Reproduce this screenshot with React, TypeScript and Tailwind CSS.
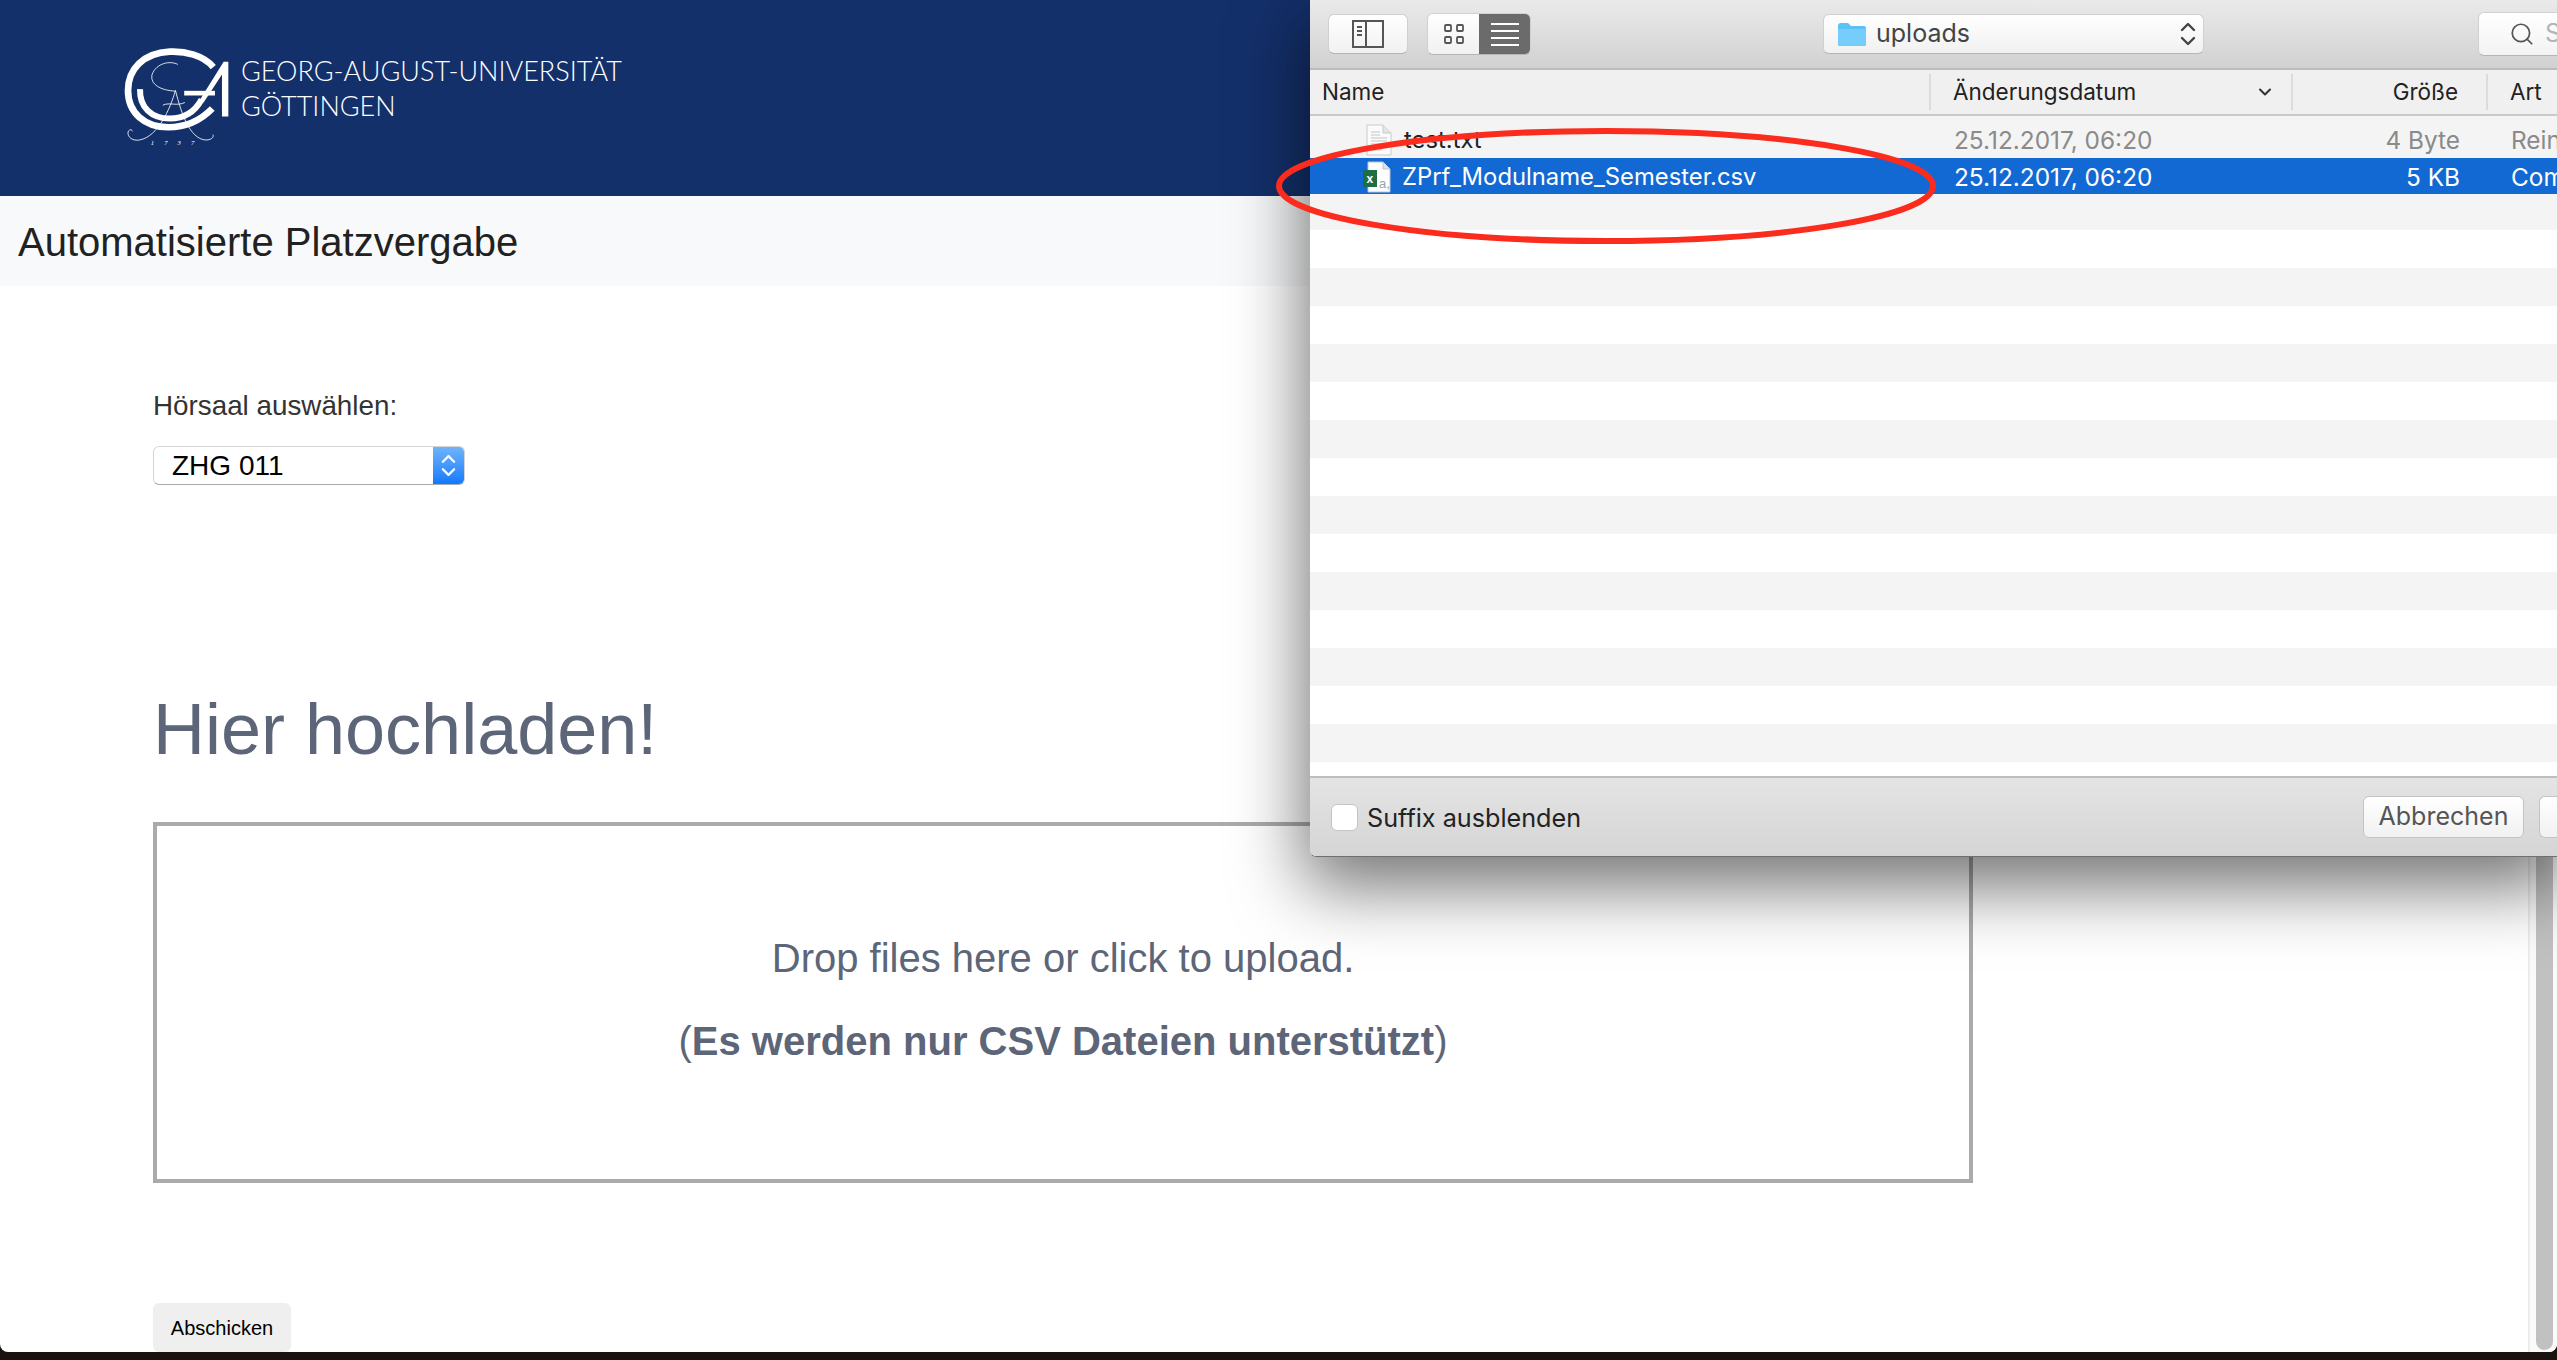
import React from 'react';
import { ChevronDown, Search } from 'lucide-react';

const sans = "[font-family:'Liberation_Sans',Arial,sans-serif]";

// GA seal, coordinates taken from a 3x crop
const Logo = () => (
  <svg viewBox="65 48 320 302" className="w-[107px] h-[101px] shrink-0 text-white" fill="none">
    <path d="M335 108 C305 72 250 60 205 62 C125 66 80 115 80 178 C80 245 130 288 200 288 C255 288 300 265 332 232" stroke="currentColor" strokeWidth="20" />
    <path d="M116 174 C114 228 150 262 205 262 C245 262 278 245 300 205" stroke="currentColor" strokeWidth="18" />
    <path d="M248 186 L340 186" stroke="currentColor" strokeWidth="14" />
    <path d="M380 92 L366 92 L290 214 L306 214 L361 130 L361 256 L380 256 Z" fill="currentColor" />
    <path d="M229 100 C205 88 165 96 152 130 C145 160 178 178 222 180" stroke="currentColor" strokeWidth="2.5" />
    <path d="M222 178 C205 235 170 315 115 326 C95 330 78 318 80 303 C82 294 92 293 93 300" stroke="currentColor" strokeWidth="2.5" />
    <path d="M222 178 C240 250 265 320 310 326 C328 327 338 318 334 310" stroke="currentColor" strokeWidth="2.5" />
    <path d="M184 222 C205 212 225 226 250 214" stroke="currentColor" strokeWidth="2.5" />
    <text x="148" y="340" fill="currentColor" fontSize="20" fontStyle="italic" textLength="130" style={{ fontFamily: "'Liberation Serif', serif" }}>
      1 7 3 7
    </text>
  </svg>
);

const TxtIcon = () => (
  <svg viewBox="0 0 26 32" className="w-[26px] h-[32px] shrink-0">
    <path d="M1 1 H17 L25 9 V31 H1 Z" fill="#fbfbfb" stroke="#c9c9c9" />
    <path d="M17 1 V9 H25" fill="#e6e6e6" stroke="#c9c9c9" />
    <path d="M5 8 H14 M5 11 H14 M5 14 H21 M5 17 H21 M5 20 H21 M5 23 H21 M5 26 H16" stroke="#c4c4c4" strokeWidth="1.2" />
  </svg>
);

const ExcelIcon = () => (
  <svg viewBox="0 0 30 32" className="w-[30px] h-[32px] shrink-0">
    <path d="M6 1 H21 L28 8 V31 H6 Z" fill="#ffffff" stroke="#b9c4d2" />
    <path d="M21 1 V8 H28" fill="#dfe3e8" stroke="#b9c4d2" />
    <rect x="1" y="9" width="14" height="17" fill="#1f6e43" />
    <text x="4.5" y="22" fill="#ffffff" fontSize="12" fontWeight="700" style={{ fontFamily: "'Liberation Sans', sans-serif" }}>x</text>
    <text x="17" y="27" fill="#9aa3ad" fontSize="13" style={{ fontFamily: "'Liberation Sans', sans-serif" }}>a,</text>
  </svg>
);

const FolderIcon = () => (
  <svg viewBox="0 0 30 24" className="w-[30px] h-[24px] shrink-0">
    <path d="M1 4 Q1 1 4 1 H11 L14 4 H27 Q29 4 29 6 V22 Q29 24 27 24 H3 Q1 24 1 22 Z" fill="#5cc1f7" />
    <path d="M1 7 H29 V22 Q29 24 27 24 H3 Q1 24 1 22 Z" fill="#74cdfb" />
  </svg>
);

// up and down carets of a macOS popup button
const Stepper = ({ className }: { className: string }) => (
  <svg viewBox="0 0 16 26" className={className} fill="none" stroke="currentColor" strokeWidth="2.4" strokeLinecap="round" strokeLinejoin="round">
    <path d="M2 9 L8 3 L14 9 M2 17 L8 23 L14 17" />
  </svg>
);

const FileDialog = () => {
  const stripes = Array.from({ length: 14 }, (_, i) => i);

  return (
    <div className="absolute top-0 left-[1310px] w-[1247px] h-[857px] rounded-bl-md overflow-visible shadow-[0_24px_70px_6px_rgba(0,0,0,0.55)] [font-family:Inter,sans-serif] z-10">
      <div className="h-full w-full flex flex-col overflow-hidden rounded-bl-md border-b border-[#6f6f6f]">
        {/* toolbar */}
        <div className="h-[70px] shrink-0 flex items-center overflow-hidden bg-linear-to-b from-[#ebeaeb] to-[#d2d1d2] border-b-2 border-[#bcbcbc] pl-[18px]">
          <button className="w-[80px] h-[40px] shrink-0 rounded-md bg-linear-to-b from-white to-[#f1f1f1] border border-[#d0d0d0] border-b-[#b5b5b5] flex items-center justify-center">
            <svg viewBox="0 0 32 32" className="w-[32px] h-[32px]" fill="none" stroke="#555" strokeWidth="2">
              <rect x="1" y="3" width="30" height="26" />
              <path d="M14 3 V29 M5 9 H10 M5 13 H10 M5 17 H10" />
            </svg>
          </button>
          <div className="ml-[19px] w-[104px] h-[42px] shrink-0 flex rounded-md overflow-hidden border border-[#d0d0d0] border-b-[#b5b5b5]">
            <div className="w-[51px] bg-linear-to-b from-white to-[#f1f1f1] flex items-center justify-center">
              <svg viewBox="0 0 20 20" className="w-[20px] h-[20px]" fill="none" stroke="#555" strokeWidth="1.8">
                <rect x="1" y="1" width="6" height="6" rx="1" />
                <rect x="13" y="1" width="6" height="6" rx="1" />
                <rect x="1" y="13" width="6" height="6" rx="1" />
                <rect x="13" y="13" width="6" height="6" rx="1" />
              </svg>
            </div>
            <div className="flex-1 bg-[#6b6b6b] flex items-center justify-center">
              <svg viewBox="0 0 28 26" className="w-[28px] h-[26px]" stroke="#fff" strokeWidth="2">
                <path d="M0 3 H28 M0 10 H28 M0 17 H28 M0 24 H28" />
              </svg>
            </div>
          </div>
          <div className="ml-[292px] w-[381px] h-[40px] shrink-0 rounded-md bg-linear-to-b from-white to-[#f1f1f1] border border-[#d0d0d0] border-b-[#b5b5b5] flex items-center pl-[13px] pr-[7px]">
            <FolderIcon />
            <span className="ml-[9px] text-[25px] text-[#444] flex-1">uploads</span>
            <Stepper className="w-[16px] h-[26px] text-[#444]" />
          </div>
          <div className="ml-[274px] w-[100px] h-[44px] shrink-0 rounded-l-md bg-linear-to-b from-white to-[#f3f3f3] border border-[#d0d0d0] border-b-[#b5b5b5] flex items-center pl-[30px]">
            <Search className="w-[26px] h-[26px] shrink-0 text-[#555]" strokeWidth={1.6} />
            <span className="ml-[10px] text-[25px] text-[#b5b5b5]">S</span>
          </div>
        </div>

        {/* column header */}
        <div className="h-[46px] shrink-0 flex items-center bg-[#f0f0f0] border-b-2 border-[#c9c9c9] text-[22.5px] text-[#222]">
          <div className="w-[621px] shrink-0 pl-[12px] h-[36px] flex items-center border-r-2 border-[#dcdcdc]">Name</div>
          <div className="w-[362px] shrink-0 pl-[22px] pr-[16px] h-[36px] flex items-center justify-between border-r-2 border-[#dcdcdc]">
            <span>Änderungsdatum</span>
            <ChevronDown className="w-[20px] h-[20px] text-[#333]" strokeWidth={2.5} />
          </div>
          <div className="w-[195px] shrink-0 pr-[28px] h-[36px] flex items-center justify-end border-r-2 border-[#dcdcdc]">Größe</div>
          <div className="pl-[22px]">Art</div>
        </div>

        {/* rows */}
        <div className="flex-1 bg-white overflow-hidden text-[24.4px]">
          <div className="h-[42px] flex items-center bg-[#f4f4f4] text-[#8a8a8a] pt-[6px]">
            <div className="w-[623px] shrink-0 pl-[56px] flex items-center gap-[12px]">
              <TxtIcon />
              <span className="text-[23.8px] text-[#222]">test.txt</span>
            </div>
            <div className="w-[362px] shrink-0 pl-[21px]">25.12.2017, 06:20</div>
            <div className="w-[165px] shrink-0 text-right">4 Byte</div>
            <div className="pl-[51px] whitespace-nowrap">Rein</div>
          </div>
          <div className="h-[36px] flex items-center bg-[#1269d3] text-white pt-[2px]">
            <div className="w-[623px] shrink-0 pl-[52px] flex items-center gap-[10px]">
              <ExcelIcon />
              <span className="text-[23.8px]">ZPrf_Modulname_Semester.csv</span>
            </div>
            <div className="w-[362px] shrink-0 pl-[21px]">25.12.2017, 06:20</div>
            <div className="w-[165px] shrink-0 text-right">5 KB</div>
            <div className="pl-[51px] whitespace-nowrap">Com</div>
          </div>
          <div className="h-[36px] bg-[#f4f4f4]" />
          {stripes.map((i) => (
            <div key={i} className={i % 2 === 0 ? 'h-[38px] bg-white' : 'h-[38px] bg-[#f4f4f4]'} />
          ))}
        </div>

        {/* footer */}
        <div className="h-[80px] shrink-0 flex bg-linear-to-b from-[#e4e4e4] to-[#d5d5d5] border-t-2 border-[#bdbdbd] relative">
          <div className="pl-[21px] pt-[26px] flex items-start">
            <div className="w-[27px] h-[27px] rounded-md bg-white border border-[#c4c4c4]" />
            <span className="ml-[9px] text-[25.2px] leading-[28px] text-[#222]">Suffix ausblenden</span>
          </div>
          <div className="ml-auto pt-[18px] flex items-start gap-[15px]">
            <button className="w-[161px] h-[42px] rounded-md bg-linear-to-b from-white to-[#f1f1f1] border border-[#c4c4c4] text-[25px] text-[#555] flex items-center justify-center">
              Abbrechen
            </button>
            <div className="w-[18px] h-[42px] rounded-l-md bg-linear-to-b from-white to-[#f1f1f1] border border-r-0 border-[#c4c4c4]" />
          </div>
        </div>
      </div>

      {/* red marker round the selected file */}
      <svg className="absolute left-[-40px] top-[125px] w-[670px] h-[125px] overflow-visible pointer-events-none" viewBox="0 0 670 125" fill="none">
        <ellipse cx="336" cy="61" rx="327" ry="55" stroke="#fb2c1d" strokeWidth="6" />
      </svg>
    </div>
  );
};

export default function App() {
  return (
    <div className={`relative h-[1360px] overflow-hidden bg-[#1a120f] ${sans}`}>
      <div className="h-[1352px] rounded-b-lg overflow-hidden bg-white flex flex-col">
        <header className="h-[196px] shrink-0 bg-[#14306b] flex items-start pl-[123px] pt-[47px]">
          <Logo />
          <div className="ml-[11px] mt-[6px] [font-family:Lato,sans-serif] font-light text-[27px] leading-[35px] text-white whitespace-nowrap">
            <div>GEORG-AUGUST-UNIVERSITÄT</div>
            <div>GÖTTINGEN</div>
          </div>
        </header>

        <div className="h-[90px] shrink-0 bg-[#f8f9fa] flex items-center pl-[18px] pt-[2px]">
          <h1 className="text-[40px] text-[#212121]">Automatisierte Platzvergabe</h1>
        </div>

        <div className="flex-1 flex min-h-0">
          <main className="flex-1 pl-[153px] flex flex-col items-start">
            <label className="mt-[102px] text-[27.8px] leading-[36px] text-[#333]">Hörsaal auswählen:</label>
            <div className="mt-[22px] w-[312px] h-[39px] rounded-md bg-white border border-[#d4d4d4] border-b-[#aaa] flex items-center overflow-hidden">
              <span className="pl-[18px] pt-[1px] flex-1 text-[28px] text-black">ZHG 011</span>
              <div className="w-[31px] h-full bg-linear-to-b from-[#6fb3fb] to-[#0a79fe] flex items-center justify-center">
                <Stepper className="w-[15px] h-[25px] text-white" />
              </div>
            </div>

            <h2 className="mt-[202px] text-[72px] leading-[84px] text-[#5d6579]">Hier hochladen!</h2>

            <div className="mt-[51px] w-[1820px] h-[361px] border-4 border-[#aaaaaa] flex flex-col items-center text-[#5d6579]">
              <p className="mt-[110px] text-[40px] leading-[44px]">Drop files here or click to upload.</p>
              <p className="mt-[39px] text-[40px] leading-[44px]">
                (<strong className="font-bold">Es werden nur CSV Dateien unterstützt</strong>)
              </p>
            </div>

            <button className="mt-[120px] w-[138px] h-[49px] rounded-md bg-[#efefef] text-[20px] text-black">Abschicken</button>
          </main>

          {/* page scrollbar */}
          <div className="w-[29px] shrink-0 bg-[#fafafa] border-l-2 border-[#ececec] pl-[6px] pr-[4px] pb-[2px] flex">
            <div className="w-full h-full rounded-b-full bg-[#c1c1c1]" />
          </div>
        </div>
      </div>

      <FileDialog />
    </div>
  );
}
